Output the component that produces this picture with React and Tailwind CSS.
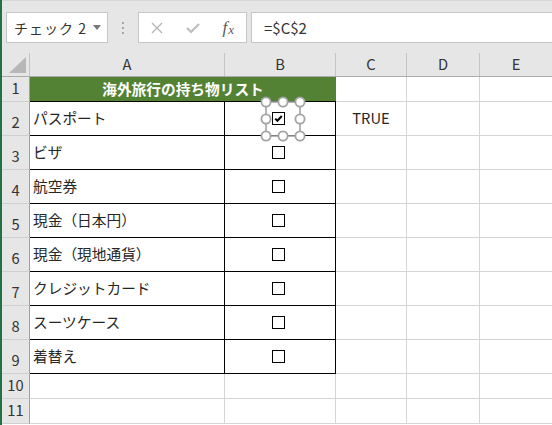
const items = [
  "パスポート",
  "ビザ",
  "航空券",
  "現金（日本円）",
  "現金（現地通貨）",
  "クレジットカード",
  "スーツケース",
  "着替え",
];

function RowHead({ n }) {
  return (
    <div className="w-[28px] shrink-0 bg-[#e6e6e6] border-r border-b border-r-[#a0a0a0] border-b-[#d0d0d0] flex items-end justify-center pb-[5px] leading-none text-[14.7px] text-[#333]">
      {n}
    </div>
  );
}

function Box({ checked }) {
  return (
    <div className="w-[13px] h-[13px] border border-black bg-white flex items-center justify-center">
      {checked && (
        <svg viewBox="0 0 11 11" className="w-[11px] h-[11px]">
          <polyline points="2.2,5.6 4.4,7.8 8.8,3" fill="none" stroke="#000" strokeWidth="2" />
        </svg>
      )}
    </div>
  );
}

function Rest({ children }) {
  return (
    <>
      <div className="w-[71px] shrink-0 border-r border-b border-[#d4d4d4] flex items-center justify-center text-[14.7px] text-[#262626] leading-none">
        {children}
      </div>
      <div className="w-[73px] shrink-0 border-r border-b border-[#d4d4d4]" />
      <div className="w-[72px] shrink-0 border-b border-[#d4d4d4]" />
    </>
  );
}

export default function App() {
  return (
    <div className="relative w-[552px] h-[425px] overflow-hidden bg-white border-l-2 border-[#217346] font-['Noto_Sans_CJK_JP',sans-serif]">
      {/* formula bar */}
      <div className="h-[53px] bg-[#e6e6e6] border-t border-[#d6d6d6] flex items-start pt-[11px]">
        <div className="ml-[4px] w-[102px] h-[31px] bg-white border border-[#c6c6c6] flex items-center justify-between pl-[7px] pr-[6px]">
          <span className="text-[14px] leading-none text-[#333] tracking-[1px]">チェック 2</span>
          <svg viewBox="0 0 8 5" className="w-[8px] h-[5px]">
            <polygon points="0,0 8,0 4,5" fill="#767676" />
          </svg>
        </div>
        <div className="w-[30px] h-[31px] flex flex-col items-center justify-center gap-[3px]">
          <div className="w-[2px] h-[2px] bg-[#a6a6a6]" />
          <div className="w-[2px] h-[2px] bg-[#a6a6a6]" />
          <div className="w-[2px] h-[2px] bg-[#a6a6a6]" />
        </div>
        <div className="w-[109px] h-[31px] bg-white border border-[#c6c6c6] flex items-center">
          <div className="w-[36px] flex justify-center">
            <svg viewBox="0 0 12 12" className="w-[12px] h-[12px]">
              <path d="M1 1 L11 11 M11 1 L1 11" stroke="#b4b4b4" strokeWidth="1.3" />
            </svg>
          </div>
          <div className="w-[36px] flex justify-center">
            <svg viewBox="0 0 14 12" className="w-[14px] h-[12px]">
              <polyline points="1,6 5,10 13,2" fill="none" stroke="#bdbdbd" strokeWidth="2.2" />
            </svg>
          </div>
          <div className="w-[36px] flex justify-center items-end font-['Liberation_Serif',serif] italic text-[#5a5a5a] leading-none">
            <span className="text-[17px]">f</span>
            <span className="text-[13px] ml-[1px]">x</span>
          </div>
        </div>
        <div className="ml-[4px] flex-1 h-[31px] bg-white border border-r-0 border-[#c6c6c6] flex items-center pl-[12px] text-[15px] leading-none text-[#333]">
          =$C$2
        </div>
      </div>

      {/* column headers */}
      <div className="flex h-[24px] bg-[#e6e6e6] border-b border-[#ababab] text-[14.7px] leading-none text-[#333]">
        <div className="w-[28px] shrink-0 border-r border-[#c4c4c4] flex items-end justify-end pr-[3px] pb-[3px]">
          <svg viewBox="0 0 17 16" className="w-[17px] h-[16px]">
            <polygon points="17,0 17,16 0,16" fill="#b7b7b7" />
          </svg>
        </div>
        <div className="w-[195px] shrink-0 border-r border-[#c4c4c4] flex items-center justify-center">A</div>
        <div className="w-[111px] shrink-0 border-r border-[#c4c4c4] flex items-center justify-center">B</div>
        <div className="w-[71px] shrink-0 border-r border-[#c4c4c4] flex items-center justify-center">C</div>
        <div className="w-[73px] shrink-0 border-r border-[#c4c4c4] flex items-center justify-center">D</div>
        <div className="w-[72px] shrink-0 flex items-center justify-center">E</div>
      </div>

      {/* row 1 */}
      <div className="flex h-[25px]">
        <RowHead n={1} />
        <div className="w-[306px] shrink-0 bg-[#548235] border-b border-black flex items-center justify-center text-white font-bold text-[14.7px] leading-none">
          海外旅行の持ち物リスト
        </div>
        <Rest />
      </div>

      {/* rows 2-9 */}
      {items.map((label, i) => (
        <div key={i} className="flex h-[34px]">
          <RowHead n={i + 2} />
          <div className="w-[195px] shrink-0 border-r border-b border-black flex items-center pl-[3px] text-[14.7px] leading-none text-[#262626]">
            {label}
          </div>
          <div className="w-[111px] shrink-0 border-r border-b border-black flex items-center pl-[47px]">
            <Box checked={i === 0} />
          </div>
          <Rest>{i === 0 ? "TRUE" : null}</Rest>
        </div>
      ))}

      {/* rows 10-11 */}
      {[10, 11].map((n) => (
        <div key={n} className="flex h-[25px]">
          <RowHead n={n} />
          <div className="w-[195px] shrink-0 border-r border-b border-[#d4d4d4]" />
          <div className="w-[111px] shrink-0 border-r border-b border-[#d4d4d4]" />
          <Rest />
        </div>
      ))}

      {/* selection handles around checkbox */}
      <svg
        viewBox="0 0 52 52"
        className="absolute left-[256px] top-[94px] w-[52px] h-[52px]"
      >
        <rect x="8" y="8" width="34" height="34" fill="none" stroke="#a3a3a3" strokeWidth="1.6" />
        {[
          [8, 8], [25, 8], [42, 8],
          [8, 25], [42, 25],
          [8, 42], [25, 42], [42, 42],
        ].map(([cx, cy], k) => (
          <circle key={k} cx={cx} cy={cy} r="4.6" fill="#fff" stroke="#a3a3a3" strokeWidth="1.8" />
        ))}
      </svg>
    </div>
  );
}
